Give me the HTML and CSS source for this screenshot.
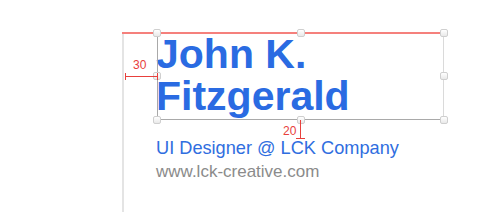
FILE: index.html
```html
<!DOCTYPE html>
<html lang="en">
<head>
    <meta charset="UTF-8">
    <meta name="viewport" content="width=device-width, initial-scale=1.0">
    <title>Business Card Layout</title>
    <link rel="stylesheet" href="styles.css">
</head>
<body>
    <!-- Artboard with the card text -->
    <div class="canvas">
        <div class="content">
            <h1 class="name">John K.<br>Fitzgerald</h1>
            <p class="role">UI Designer @ LCK Company</p>
            <p class="site">www.lck-creative.com</p>
        </div>

        <!-- Guides & selection overlay -->
        <div class="guide-top"></div>
        <div class="selection">
            <span class="handle tl"></span>
            <span class="handle tc"></span>
            <span class="handle tr"></span>
            <span class="handle ml"></span>
            <span class="handle mr"></span>
            <span class="handle bl"></span>
            <span class="handle bc"></span>
            <span class="handle br"></span>
        </div>

        <!-- Spacing measurements -->
        <div class="measure measure-h"><span class="measure-label">30</span></div>
        <div class="measure measure-v"><span class="measure-label">20</span></div>
    </div>
</body>
</html>
```

FILE: styles.css
```css
* {
    margin: 0;
    padding: 0;
    box-sizing: border-box;
}
body {
    font-family: "Liberation Sans", Arial, sans-serif;
    background-color: #fff;
    width: 480px;
    height: 212px;
    overflow: hidden;
}
.canvas {
    position: relative;
    margin: 33px 0 0 122px;
    height: 179px;
    border-left: 2px solid #e4e4e4;
}
.content {
    padding-left: 32px;
}
.name {
    margin-top: 4px;
    font-size: 41px;
    line-height: 42px;
    font-weight: bold;
    color: #2a6be2;
}
.role {
    margin-top: 20px;
    font-size: 18.2px;
    line-height: 22px;
    color: #2f6ee0;
}
.site {
    margin-top: 2px;
    font-size: 17px;
    line-height: 22px;
    color: #8b8b8b;
}

/* ============= Overlay ========= */
.guide-top {
    position: absolute;
    left: -2px;
    top: -1px;
    width: 322px;
    height: 2px;
    background: #f5807c;
}
.selection {
    position: absolute;
    left: 33px;
    top: 0;
    width: 287px;
    height: 87px;
    border-left: 1px solid #a9a9a9;
    border-bottom: 1px solid #a9a9a9;
    border-right: 1px solid #dadada;
}
.handle {
    position: absolute;
    width: 8px;
    height: 8px;
    border: 1px solid #cfcfcf;
    border-radius: 2px;
    background: linear-gradient(#fff, #e9e9e9);
}
.handle.tl { left: -5px; top: -4px; }
.handle.tc { left: 139px; top: -4px; }
.handle.tr { right: -5px; top: -4px; }
.handle.ml { left: -5px; top: 39px; }
.handle.mr { right: -5px; top: 39px; }
.handle.bl { left: -5px; bottom: -5px; }
.handle.bc { left: 139px; bottom: -5px; }
.handle.br { right: -5px; bottom: -5px; }

.measure {
    position: absolute;
    background: #e8403c;
}
.measure-label {
    position: absolute;
    font-size: 12px;
    line-height: 12px;
    color: #e8403c;
}
.measure-h {
    left: 1px;
    top: 43px;
    width: 33px;
    height: 1px;
}
.measure-h::before,
.measure-h::after {
    content: "";
    position: absolute;
    top: -3px;
    width: 1px;
    height: 7px;
    background: #e8403c;
}
.measure-h::before { left: 0; }
.measure-h::after { right: 0; }
.measure-h .measure-label {
    left: 8px;
    top: -17px;
}
.measure-v {
    left: 176px;
    top: 87px;
    width: 1px;
    height: 19px;
}
.measure-v::after {
    content: "";
    position: absolute;
    left: -4px;
    bottom: 0;
    width: 9px;
    height: 1px;
    background: #e8403c;
}
.measure-v .measure-label {
    left: -17px;
    top: 5px;
}
```
